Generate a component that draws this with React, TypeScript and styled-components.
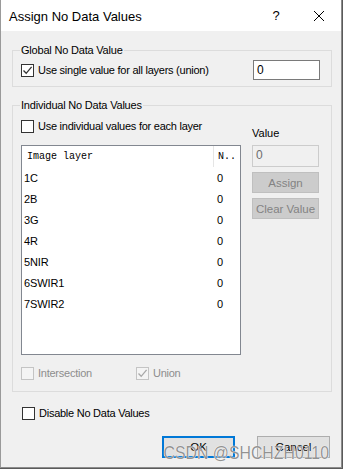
import React from "react";
import styled, { createGlobalStyle } from "styled-components";

const layers = [
  { name: "1C", value: 0 },
  { name: "2B", value: 0 },
  { name: "3G", value: 0 },
  { name: "4R", value: 0 },
  { name: "5NIR", value: 0 },
  { name: "6SWIR1", value: 0 },
  { name: "7SWIR2", value: 0 },
];

function CheckBox({ checked, disabled }: { checked?: boolean; disabled?: boolean }) {
  return (
    <Box $disabled={disabled}>
      {checked && (
        <svg width="11" height="11" viewBox="0 0 11 11">
          <path
            d="M1.5 5.5 L4.2 8.3 L9.6 1.8"
            fill="none"
            stroke={disabled ? "#a8a8a8" : "#333"}
            strokeWidth="1.3"
          />
        </svg>
      )}
    </Box>
  );
}

export default function App() {
  return (
    <>
      <GlobalStyle />
      <Window>
        <TitleBar>
          <TitleText>Assign No Data Values</TitleText>
          <HelpGlyph>?</HelpGlyph>
          <CloseIcon width="12" height="12" viewBox="0 0 12 12">
            <path d="M1 1 L11 11 M11 1 L1 11" stroke="#000" strokeWidth="1" fill="none" />
          </CloseIcon>
        </TitleBar>

        <Body>
          <Group $top={13}>
            <Legend>Global No Data Value</Legend>
            <GlobalRow>
              <CheckRow>
                <CheckBox checked />
                <Label>Use single value for all layers (union)</Label>
              </CheckRow>
              <TextInput>0</TextInput>
            </GlobalRow>
          </Group>

          <Group $top={12} $bottom={11}>
            <Legend>Individual No Data Values</Legend>
            <IndividualGrid>
              <CheckRow $alignTop>
                <CheckBox />
                <Label>Use individual values for each layer</Label>
              </CheckRow>
              <ValueLabel>Value</ValueLabel>

              <ListView>
                <ListHeader>
                  <HeaderCell $first>Image layer</HeaderCell>
                  <HeaderCell>N..</HeaderCell>
                </ListHeader>
                {layers.map((l) => (
                  <ListRow key={l.name}>
                    <Cell $first>{l.name}</Cell>
                    <Cell>{l.value}</Cell>
                  </ListRow>
                ))}
              </ListView>

              <SideColumn>
                <TextInput $disabled>0</TextInput>
                <Button $disabled>Assign</Button>
                <Button $disabled>Clear Value</Button>
              </SideColumn>
            </IndividualGrid>

            <ModeRow>
              <CheckRow>
                <CheckBox disabled />
                <Label $disabled>Intersection</Label>
              </CheckRow>
              <CheckRow>
                <CheckBox checked disabled />
                <Label $disabled>Union</Label>
              </CheckRow>
            </ModeRow>
          </Group>

          <DisableRow>
            <CheckBox />
            <Label>Disable No Data Values</Label>
          </DisableRow>

          <ButtonRow>
            <Button $default>OK</Button>
            <Button>Cancel</Button>
          </ButtonRow>
        </Body>

        <Watermark>CSDN @SHCHZH0110</Watermark>
      </Window>
    </>
  );
}

const GlobalStyle = createGlobalStyle`
  html, body {
    margin: 0;
    padding: 0;
    background: #5a5a5a;
  }
  body {
    font-family: "Liberation Sans", Arial, sans-serif;
    font-size: 11px;
    color: #000;
  }
`;

const Window = styled.div`
  position: relative;
  width: 340px;
  height: 467px;
  background: #f0f0f0;
  border-left: 1px solid #9a9a9a;
  border-right: 1px solid #8c8c8c;
  border-bottom: 1px solid #8c8c8c;
  display: flex;
  flex-direction: column;
  overflow: hidden;
`;

const TitleBar = styled.div`
  height: 31px;
  background: #fff;
  display: flex;
  align-items: center;
  padding: 0 0 0 8px;
`;

const TitleText = styled.div`
  flex: 1;
  font-family: "Liberation Sans", Arial, sans-serif;
  font-size: 13px;
  padding-top: 1px;
`;

const HelpGlyph = styled.div`
  font-family: "Liberation Sans", Arial, sans-serif;
  font-size: 13px;
  width: 20px;
  margin-right: 27px;
  text-align: center;
`;

const CloseIcon = styled.svg`
  margin-right: 16px;
`;

const Body = styled.div`
  flex: 1;
  display: flex;
  flex-direction: column;
  padding: 0 9px 0 11px;
`;

const Group = styled.fieldset<{ $top: number; $bottom?: number }>`
  margin: ${(p) => p.$top}px 0 0 0;
  padding: 0 11px ${(p) => p.$bottom ?? 6}px 8px;
  border: 1px solid #dcdcdc;
  min-width: 0;
`;

const Legend = styled.legend`
  padding: 0 1px;
  margin-left: -1px;
  font-size: 11px;
  letter-spacing: -0.2px;
  line-height: 13px;
  height: 13px;
`;

const GlobalRow = styled.div`
  display: flex;
  align-items: center;
  justify-content: space-between;
  margin-top: 3px;
`;

const CheckRow = styled.div<{ $alignTop?: boolean }>`
  display: flex;
  align-items: center;
  gap: 4px;
  align-self: ${(p) => (p.$alignTop ? "start" : "auto")};
  margin-top: ${(p) => (p.$alignTop ? "8px" : "0")};
`;

const Box = styled.div<{ $disabled?: boolean }>`
  width: 11px;
  height: 11px;
  border: 1px solid ${(p) => (p.$disabled ? "#c4c4c4" : "#333")};
  background: ${(p) => (p.$disabled ? "#f4f4f4" : "#fff")};
  display: flex;
  align-items: center;
  justify-content: center;
  flex-shrink: 0;
`;

const Label = styled.span<{ $disabled?: boolean }>`
  font-size: 11px;
  letter-spacing: -0.25px;
  line-height: 13px;
  color: ${(p) => (p.$disabled ? "#8d8d8d" : "#000")};
  white-space: nowrap;
`;

const TextInput = styled.div<{ $disabled?: boolean }>`
  box-sizing: border-box;
  width: 67px;
  height: ${(p) => (p.$disabled ? 22 : 20)}px;
  border: 1px solid ${(p) => (p.$disabled ? "#cccccc" : "#7a7a7a")};
  background: ${(p) => (p.$disabled ? "#f0f0f0" : "#fff")};
  color: ${(p) => (p.$disabled ? "#6d6d6d" : "#000")};
  font-size: 12px;
  line-height: 16px;
  padding: 1px 3px;
`;

const IndividualGrid = styled.div`
  display: grid;
  grid-template-columns: 220px 67px;
  grid-template-rows: 33px auto;
  column-gap: 11px;
`;

const ValueLabel = styled.div`
  align-self: end;
  font-size: 11px;
  line-height: 13px;
  margin-bottom: 5px;
`;

const ListView = styled.div`
  box-sizing: border-box;
  height: 210px;
  border: 1px solid #828790;
  background: #fff;
  display: flex;
  flex-direction: column;
`;

const ListHeader = styled.div`
  display: grid;
  grid-template-columns: 192px 1fr;
  height: 21px;
  align-items: center;
`;

const HeaderCell = styled.div<{ $first?: boolean }>`
  font-family: "Liberation Mono", "Courier New", monospace;
  font-size: 10px;
  height: 100%;
  display: flex;
  align-items: center;
  padding-left: ${(p) => (p.$first ? "5px" : "4px")};
  border-right: ${(p) => (p.$first ? "1px solid #e5e5e5" : "none")};
`;

const ListRow = styled.div`
  display: grid;
  grid-template-columns: 192px 1fr;
  height: 21px;
  align-items: center;
`;

const Cell = styled.div<{ $first?: boolean }>`
  font-size: 11px;
  letter-spacing: -0.1px;
  padding-left: ${(p) => (p.$first ? "2px" : "3px")};
`;

const SideColumn = styled.div`
  display: flex;
  flex-direction: column;
  gap: 5px;
`;

const Button = styled.button<{ $disabled?: boolean; $default?: boolean }>`
  box-sizing: border-box;
  width: ${(p) => (p.$disabled ? "67px" : "73px")};
  height: ${(p) => (p.$disabled ? "21px" : "22px")};
  margin: 0;
  padding: 0;
  font-family: "Liberation Sans", Arial, sans-serif;
  font-size: 11.5px;
  color: ${(p) => (p.$disabled ? "#838383" : "#000")};
  background: ${(p) => (p.$disabled ? "#cccccc" : "#e1e1e1")};
  border: ${(p) =>
    p.$default ? "2px solid #0078d7" : p.$disabled ? "1px solid #bfbfbf" : "1px solid #adadad"};
`;

const ModeRow = styled.div`
  display: flex;
  margin-top: 12px;
  & > div:first-child {
    width: 115px;
  }
`;

const DisableRow = styled.div`
  display: flex;
  align-items: center;
  gap: 4px;
  margin: 15px 0 0 10px;
`;

const ButtonRow = styled.div`
  display: flex;
  justify-content: flex-end;
  gap: 22px;
  margin-top: 16px;
  padding-right: 2px;
`;

const Watermark = styled.div`
  position: absolute;
  right: 12px;
  bottom: 3px;
  font-family: "Liberation Sans", Arial, sans-serif;
  font-size: 18px;
  transform: scaleX(0.88);
  transform-origin: right center;
  color: rgba(110, 110, 110, 0.75);
  text-shadow: 0 0 1px #fff, 0 0 1px #fff;
  pointer-events: none;
`;
